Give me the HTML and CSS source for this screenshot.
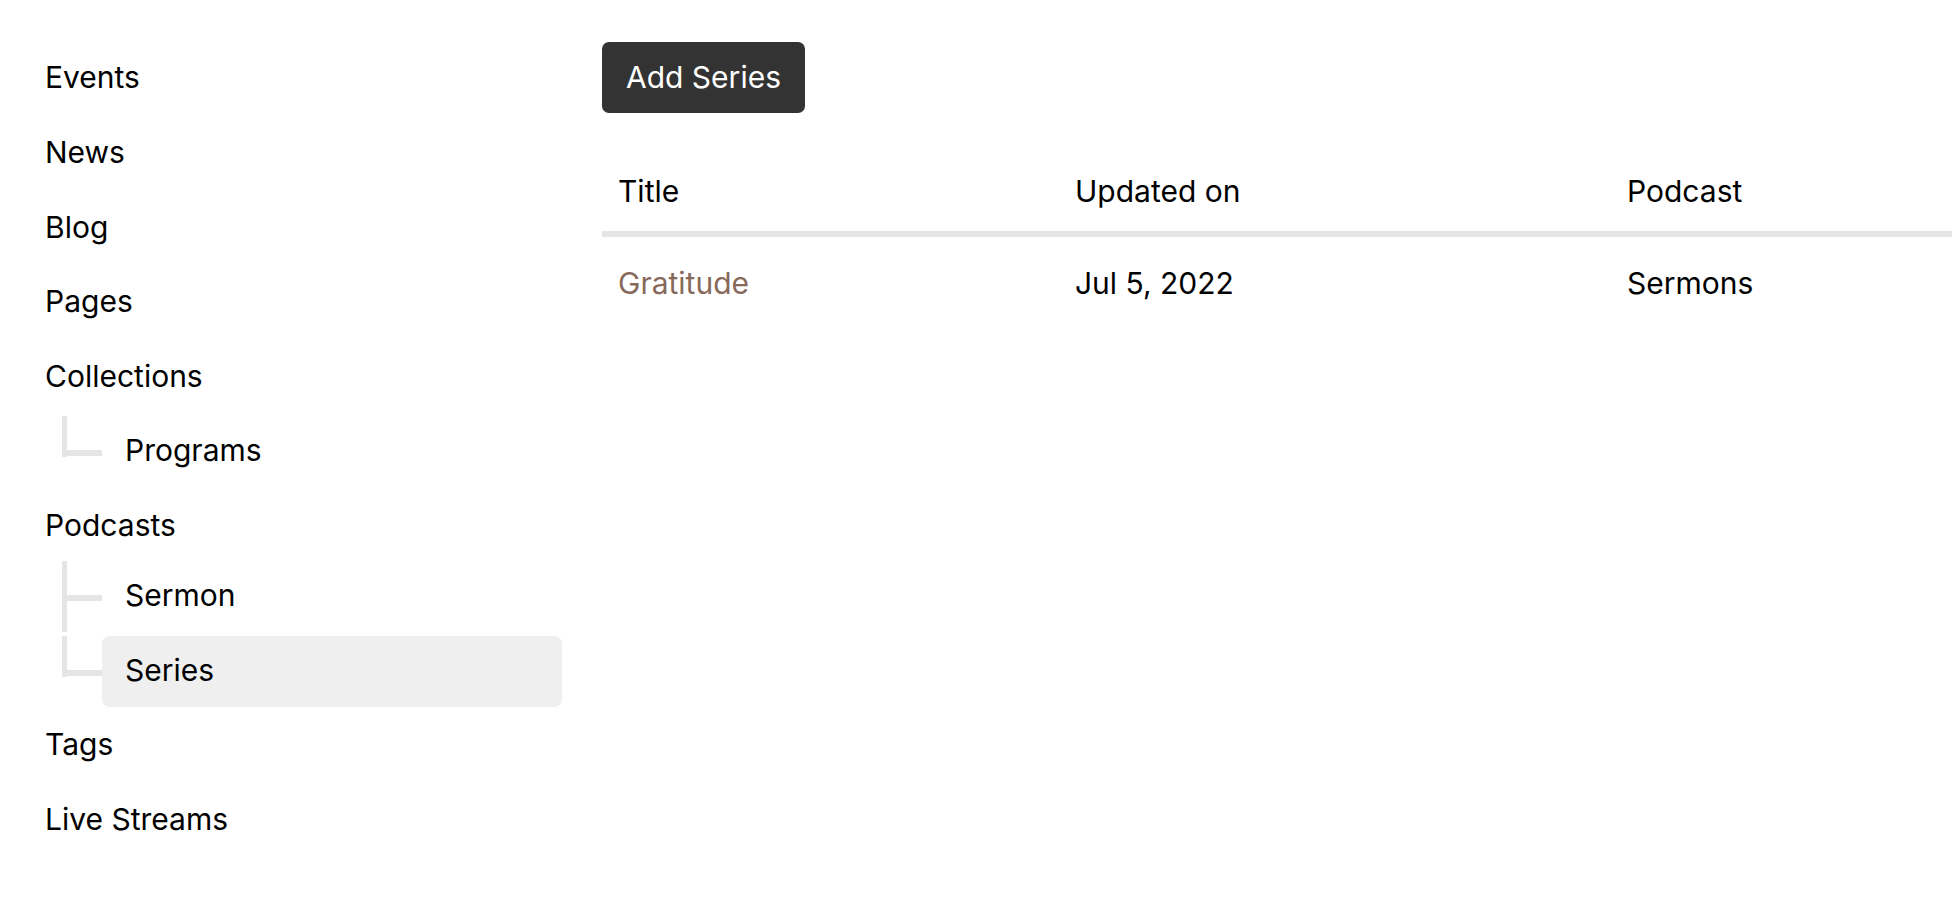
FILE: index.html
```html
<!DOCTYPE html>
<html lang="en">
<head>
<meta charset="utf-8">
<title>Series</title>
<link rel="stylesheet" href="styles.css">
</head>
<body>
<div class="layout">
  <nav class="sidebar">
    <ul class="nav">
      <li><a class="nav-link" href="#">Events</a></li>
      <li><a class="nav-link" href="#">News</a></li>
      <li><a class="nav-link" href="#">Blog</a></li>
      <li><a class="nav-link" href="#">Pages</a></li>
      <li>
        <a class="nav-link" href="#">Collections</a>
        <ul class="subnav">
          <li class="sub-item last"><a class="nav-link" href="#">Programs</a></li>
        </ul>
      </li>
      <li>
        <a class="nav-link" href="#">Podcasts</a>
        <ul class="subnav subnav-tight">
          <li class="sub-item"><a class="nav-link" href="#">Sermon</a></li>
          <li class="sub-item last"><a class="nav-link active" href="#">Series</a></li>
        </ul>
      </li>
      <li><a class="nav-link" href="#">Tags</a></li>
      <li><a class="nav-link" href="#">Live Streams</a></li>
    </ul>
  </nav>
  <main class="main">
    <button class="btn" type="button">Add Series</button>
    <table class="table">
      <colgroup>
        <col class="col-title">
        <col class="col-updated">
        <col class="col-podcast">
      </colgroup>
      <thead>
        <tr>
          <th>Title</th>
          <th>Updated on</th>
          <th>Podcast</th>
        </tr>
      </thead>
      <tbody>
        <tr>
          <td><a class="row-link" href="#">Gratitude</a></td>
          <td>Jul 5, 2022</td>
          <td>Sermons</td>
        </tr>
      </tbody>
    </table>
  </main>
</div>
</body>
</html>
```

FILE: styles.css
```css
* {
  box-sizing: border-box;
}

html, body {
  margin: 0;
  background: #ffffff;
}

body {
  font-family: "Inter", "Noto Sans", "Liberation Sans", sans-serif;
  font-size: 30px;
  color: #000000;
  padding: 42px 0 0 22px;
  overflow: hidden;
}

.layout {
  display: flex;
  gap: 40px;
  align-items: flex-start;
}

.sidebar {
  width: 540px;
  flex: 0 0 540px;
}

.nav,
.subnav {
  list-style: none;
  margin: 0;
  padding: 0;
  display: flex;
  flex-direction: column;
  gap: 3.75px;
}

.nav > li:first-child .nav-link {
  margin-top: 1px;
}

.subnav {
  margin-top: 3px;
}

.subnav.subnav-tight {
  margin-top: -1px;
}

.nav-link {
  display: block;
  padding: 12px 23px 14px;
  line-height: 45px;
  color: #000000;
  text-decoration: none;
  border-radius: 8px;
}

.nav-link.active {
  background: #efefef;
}

.sub-item {
  position: relative;
  padding-left: 80px;
}

.sub-item::before {
  content: "";
  position: absolute;
  left: 40px;
  top: 0;
  width: 5px;
  height: 100%;
  background: #e5e5e5;
}

.sub-item.last::before {
  height: 41px;
}

.sub-item::after {
  content: "";
  position: absolute;
  left: 40px;
  top: 34px;
  width: 40px;
  height: 6px;
  background: #e5e5e5;
}

.main {
  flex: 1;
  min-width: 0;
}

.btn {
  display: block;
  margin: 0;
  border: 0;
  padding: 0 24px;
  height: 71px;
  line-height: 71px;
  background: #333333;
  color: #ffffff;
  font-family: inherit;
  font-size: 30px;
  border-radius: 7px;
  cursor: pointer;
}

.table {
  margin-top: 39px;
  width: 100%;
  border-collapse: separate;
  border-spacing: 0;
  table-layout: fixed;
}

.col-title {
  width: 457px;
}

.col-updated {
  width: 552px;
}

.table th {
  font-weight: 400;
  text-align: left;
  padding: 17px 16px;
  line-height: 45px;
  border-bottom: 6px solid #e5e5e5;
}

.table td {
  padding: 24px 16px 16px;
  line-height: 45px;
  text-align: left;
}

.row-link {
  color: #87695a;
  text-decoration: none;
}
```
